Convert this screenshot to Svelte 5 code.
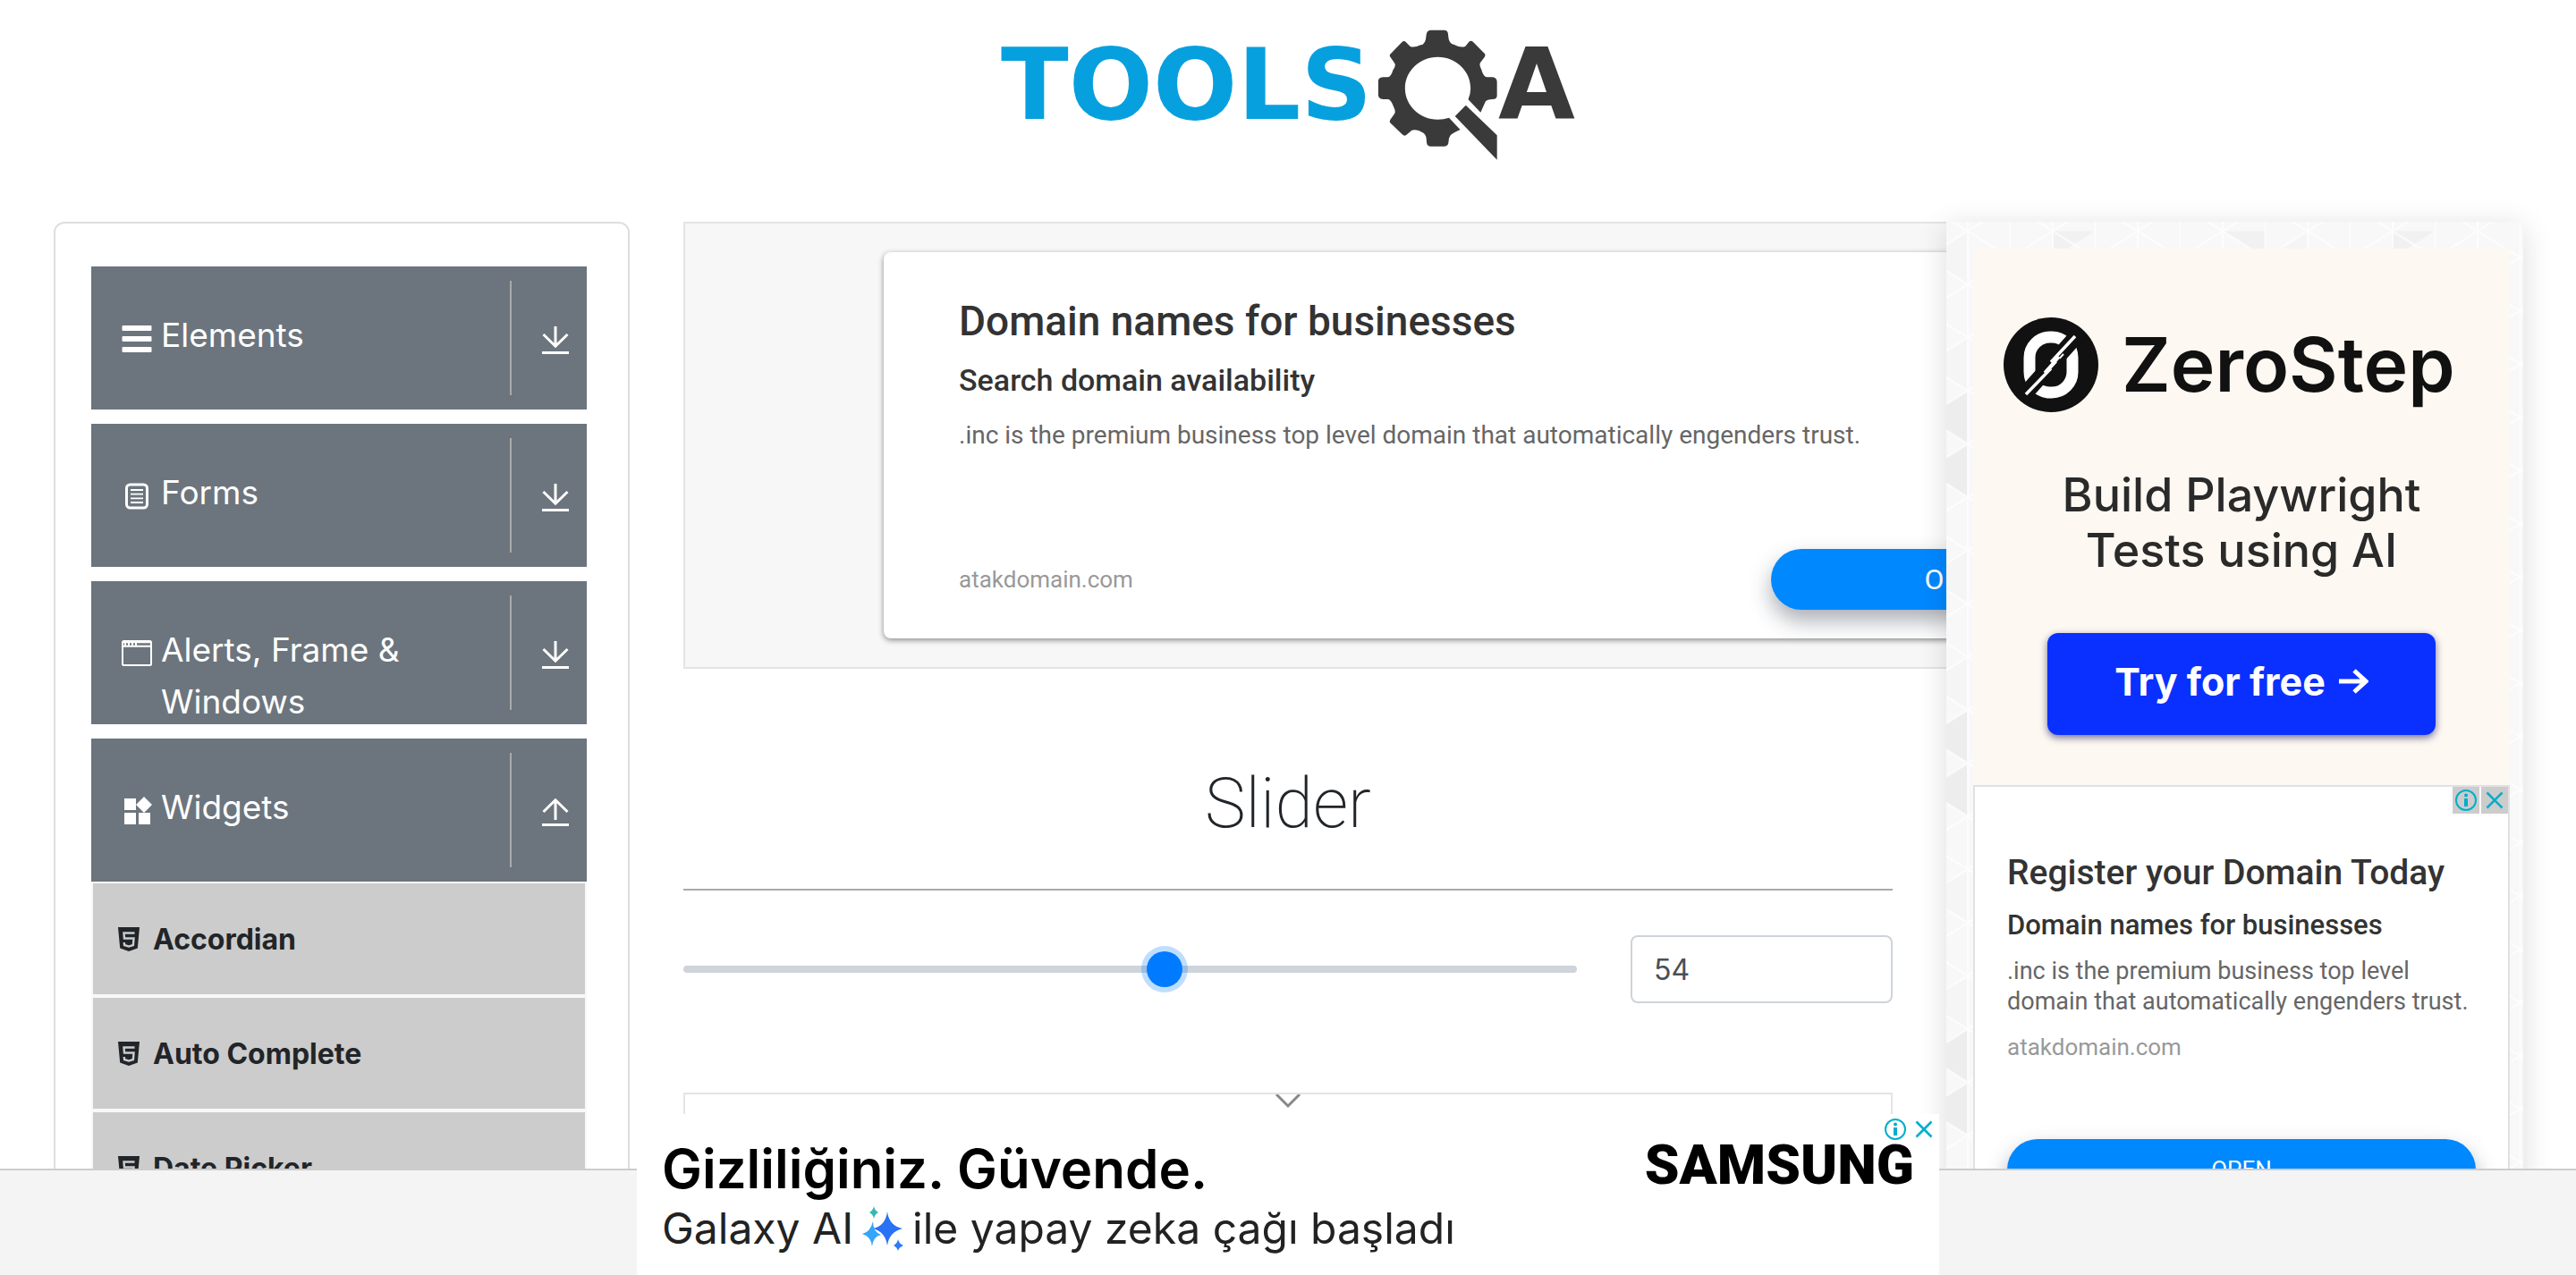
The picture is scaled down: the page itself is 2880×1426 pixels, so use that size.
<script lang="ts">
  let value = $state(54);

  const groups = [
    { title: 'Elements', icon: 'bars', open: false },
    { title: 'Forms', icon: 'form', open: false },
    { title: 'Alerts, Frame & Windows', icon: 'window', open: false },
    { title: 'Widgets', icon: 'widgets', open: true },
  ];
  const widgets = ['Accordian', 'Auto Complete', 'Date Picker'];
</script>

{#snippet infoIcon()}
  <svg class="badge-icon" viewBox="0 0 30 30" aria-hidden="true">
    <circle cx="15" cy="15" r="11" fill="none" stroke="#00aecd" stroke-width="2" />
    <circle cx="15" cy="9.6" r="2" fill="#00aecd" />
    <path d="M13 13h4v9h-4z" fill="#00aecd" />
  </svg>
{/snippet}

{#snippet closeIcon()}
  <svg class="badge-icon" viewBox="0 0 30 30" aria-hidden="true">
    <path d="M6.500 6.500l17 17M23.500 6.500l-17 17" stroke="#00aecd" stroke-width="2.600" />
  </svg>
{/snippet}

<div class="page">
  <header>
    <a class="logo" href="#home" aria-label="ToolsQA">
      <span class="tools">TOOLS</span>
      <svg class="gear" viewBox="980 70 302 438" preserveAspectRatio="none" aria-hidden="true">
        <path
          fill="#3a3a3a"
          fill-rule="evenodd"
          d="M1102 90Q1103 72 1113 72H1148Q1157 72 1157 90Q1158 118 1172 121Q1190 133 1200 126L1210 110Q1215 106 1220 113L1246 148Q1252 154 1248 162L1237 182Q1234 190 1240 204Q1245 229 1254 230H1268Q1279 232 1279 246V291Q1279 304 1268 304Q1254 304 1250 312L1238 348L1207 305Q1213 286 1213 267C1213 209 1176 162 1131 162S1049 209 1049 267S1086 372 1131 372Q1146 372 1159 366L1187 406Q1166 418 1162 426Q1158 434 1158 446Q1157 462 1148 462H1112Q1104 462 1103 448Q1103 424 1095 417Q1078 403 1066 408L1054 422Q1048 430 1042 422L1014 386Q1008 380 1013 371L1023 352Q1026 345 1021 331Q1014 305 1007 304H994Q982 302 982 288V244Q982 231 994 230H1006Q1014 229 1019 206Q1027 190 1023 183L1013 164Q1008 156 1014 150L1041 113Q1046 106 1051 112L1062 127Q1072 132 1088 122Q1101 120 1102 90Z"
        />
        <path fill="#3a3a3a" d="M1201 324L1279 425V507L1174 361Z" />
      </svg>
      <span class="logo-a">A</span>
    </a>
  </header>

  <div class="columns">
    <nav class="sidebar" aria-label="Sections">
      {#each groups as group}
        <button class="group" type="button" aria-expanded={group.open}>
          <span class="group-icon">
            <svg viewBox="0 0 34 34" aria-hidden="true">
              {#if group.icon === 'bars'}
                <path d="M1 2.500h32v5H1zM1 14.500h32v5H1zM1 26.500h32v5H1z" fill="#fff" stroke="#fff" stroke-linejoin="round" />
              {:else if group.icon === 'form'}
                <rect x="5.500" y="4" width="23" height="26" rx="4" fill="none" stroke="#fff" stroke-width="3" />
                <path d="M10 10h14M10 14.700h14M10 19.400h14M10 24h14" stroke="#fff" stroke-width="1.800" />
              {:else if group.icon === 'window'}
                <rect x="1" y="3" width="32" height="27" rx="1.500" fill="none" stroke="#fff" stroke-width="2" />
                <path d="M1 4.300h32M1 8.800h32" stroke="#fff" stroke-width="2" />
                <path d="M4 4v4M8 4v4M12 4v4M16 4v4" stroke="#fff" stroke-width="2" />
              {:else}
                <path d="M3 3h13v13H3zM3 19h13v13H3zM19 19h13v13H19zM25 1l9 9-9 9-9-9z" fill="#fff" />
              {/if}
            </svg>
          </span>
          <span class="group-title">{group.title}</span>
          <span class="group-toggle">
            <svg viewBox="0 0 30 32" aria-hidden="true">
              {#if group.open}
                <path d="M15 24V2M1.500 15L15 1.800L28.500 15" fill="none" stroke="#fff" stroke-width="3" />
              {:else}
                <path d="M15 0v22M1.500 9L15 22.200L28.500 9" fill="none" stroke="#fff" stroke-width="3" />
              {/if}
              <path d="M0 29.500h30" stroke="#fff" stroke-width="3" />
            </svg>
          </span>
        </button>
        {#if group.open}
          <ul>
            {#each widgets as widget}
              <li>
                <a href="#{widget}">
                  <svg viewBox="0 0 24 27" aria-hidden="true">
                    <path d="M0 0h24l-2.200 23.500L12 27l-9.800-3.500z" fill="#212529" />
                    <path d="M18.500 6.500H6.500l.5 6h10.500l-.6 7.500-4.900 1.600-4.900-1.600-.3-3" fill="none" stroke="#ccc" stroke-width="2.400" />
                  </svg>
                  {widget}
                </a>
              </li>
            {/each}
          </ul>
        {/if}
      {/each}
    </nav>

    <main>
      <section class="wide-ad" aria-label="Advertisement">
        <div class="wide-card">
          <h2>Domain names for businesses</h2>
          <h3>Search domain availability</h3>
          <p>.inc is the premium business top level domain that automatically engenders trust.</p>
          <div class="wide-foot">
            <span class="domain">atakdomain.com</span>
            <button class="open" type="button">OPEN</button>
          </div>
        </div>
      </section>

      <h1>Slider</h1>

      <form class="slider-row">
        <input class="range" type="range" min="0" max="100" aria-label="Slider" bind:value />
        <input class="value" type="text" aria-label="Slider value" bind:value />
      </form>

      <section class="lower-ad" aria-label="Advertisement">
        <svg viewBox="0 0 28 16" aria-hidden="true">
          <path d="M1 0l13 13L27 0" fill="none" stroke="#888" stroke-width="3" />
        </svg>
      </section>
    </main>

    <aside>
      <svg class="pattern" aria-hidden="true">
        <defs>
          <pattern id="mesh" x="24" y="10.500" width="95" height="59.500" patternUnits="userSpaceOnUse">
            <path d="M0 0L95 59.500M0 59.500L95 0M0 0V59.500M47.500 0V59.500M95 0V59.500" stroke="#fff" stroke-opacity="0.7" stroke-width="2" />
          </pattern>
          <pattern id="shade" x="24" y="10.500" width="380" height="357" patternUnits="userSpaceOnUse">
            <path d="M380 178.500v59.500l-47.500-29.750zM380 238v59.500l-47.500-29.750z" fill="#ededed" />
            <path d="M380 119v59.500l-47.500-29.750zM380 0v59.500l-47.500-29.750z" fill="#f5f5f5" />
            <path d="M95 0v30L142 0zM285 0l47-30v60z" fill="#f1f1f1" />
          </pattern>
        </defs>
        <rect width="100%" height="100%" fill="#f8f8f8" />
        <rect width="100%" height="100%" fill="url(#shade)" />
        <rect width="100%" height="100%" fill="url(#mesh)" />
      </svg>

      <section class="zero" aria-label="ZeroStep">
        <div class="zero-brand">
          <svg viewBox="0 0 106 106" aria-hidden="true">
            <circle cx="53" cy="53" r="53" fill="#111" />
            <rect x="29" y="22" width="48" height="62" rx="23" fill="none" stroke="#fff" stroke-width="13" />
            <path d="M20 90L86 16" stroke="#111" stroke-width="17" />
            <path d="M25 86L53 57M53 50L80 21M46 62L62 44" stroke="#fff" stroke-width="3.500" />
            <path d="M37 74L67 41" stroke="#fff" stroke-width="2" stroke-dasharray="14 5" />
          </svg>
          <span>ZeroStep</span>
        </div>
        <p>Build Playwright<br />Tests using AI</p>
        <button type="button">
          Try for free
          <svg viewBox="0 0 34 32" aria-hidden="true">
            <path d="M1 16h30M18 4l13 12-13 12" fill="none" stroke="#fff" stroke-width="5" />
          </svg>
        </button>
      </section>

      <section class="side-ad" aria-label="Advertisement">
        <div class="badges">
          <button type="button" aria-label="Ad information">{@render infoIcon()}</button>
          <button type="button" aria-label="Close ad">{@render closeIcon()}</button>
        </div>
        <h2>Register your Domain Today</h2>
        <h3>Domain names for businesses</h3>
        <p>.inc is the premium business top level domain that automatically engenders trust.</p>
        <span class="domain">atakdomain.com</span>
        <button class="open" type="button">OPEN</button>
      </section>
    </aside>
  </div>

  <footer>
    <section class="banner" aria-label="Advertisement">
      <div class="banner-copy">
        <strong>Gizliliğiniz. Güvende.</strong>
        <span class="galaxy">
          Galaxy AI
          <svg viewBox="0 0 46 50" aria-hidden="true">
            <path d="M28 6Q30 22 45 25Q30 29 28 44Q26 29 12 25Q26 22 28 6Z" fill="#2a72f5" />
            <path d="M12 17Q12 29 21 32Q12 34 11 45Q10 34 0 31Q9 29 12 17Z" fill="#35a5fa" />
            <path d="M13 0Q14 5 18 7Q14 9 13 14Q12 9 8 7Q12 5 13 0Z" fill="#35b9b0" />
            <path d="M40 37Q41 42 46 44Q41 46 40 50Q39 46 35 44Q39 42 40 37Z" fill="#2a7cf8" />
          </svg>
          ile yapay zeka çağı başladı
        </span>
      </div>
      <span class="samsung">SAMSUNG</span>
      <div class="banner-badges">
        <button type="button" aria-label="Ad information">{@render infoIcon()}</button>
        <button type="button" aria-label="Close ad">{@render closeIcon()}</button>
      </div>
    </section>
  </footer>
</div>

<style>
  :global(body) {
    margin: 0;
    background: #fff;
  }

  * {
    box-sizing: border-box;
  }

  h1,
  h2,
  h3,
  p,
  ul {
    margin: 0;
    padding: 0;
    font-weight: 400;
  }

  button {
    padding: 0;
    border: 0;
    background: none;
    font: inherit;
    cursor: pointer;
  }

  svg {
    display: block;
    flex: none;
  }

  .page {
    height: 100vh;
    overflow: hidden;
    font-family: Inter, 'Liberation Sans', sans-serif;
    color: #212529;
  }

  header {
    display: flex;
    justify-content: center;
    height: 248px;
    padding-top: 33px;
  }

  .logo {
    display: flex;
    height: 146px;
    font-family: 'DejaVu Sans', sans-serif;
    font-size: 111px;
    font-weight: 700;
    line-height: 124px;
    text-decoration: none;
  }

  .tools {
    color: #07a0df;
  }

  .gear {
    width: 135px;
    height: 146px;
    margin-left: 6px;
  }

  .logo-a {
    color: #3a3a3a;
  }

  .columns {
    display: grid;
    grid-template-columns: minmax(0, 644fr) minmax(0, 1352fr) 645px;
    gap: 60px;
    align-items: start;
    padding: 0 59px 0 60px;
  }

  .sidebar {
    height: 1400px;
    padding: 48px 46px 0 40px;
    border: 2px solid #dedede;
    border-radius: 12px;
  }

  .group {
    display: flex;
    width: 100%;
    height: 160px;
    margin-bottom: 16px;
    padding: 0 20px 0 34px;
    overflow: hidden;
    background: #6c757d;
    color: #fff;
    font-size: 37px;
    line-height: 58px;
    text-align: left;
  }

  .group[aria-expanded='true'] {
    margin-bottom: 0;
  }

  .group-icon {
    padding-top: 64px;
  }

  .group-icon svg {
    width: 34px;
    height: 34px;
  }

  .group-title {
    flex: 1;
    padding: 48px 40px 0 10px;
  }

  .group-toggle {
    display: flex;
    align-items: center;
    height: 128px;
    margin-top: 16px;
    padding: 6px 0 0 34px;
    border-left: 2px solid #aaa;
  }

  .group-toggle svg {
    width: 30px;
    height: 32px;
  }

  .sidebar li {
    list-style: none;
    border: 2px solid #f8f8f8;
    background: #ccc;
  }

  .sidebar li a {
    display: flex;
    align-items: center;
    gap: 15px;
    height: 124px;
    padding-left: 28px;
    color: #212529;
    font-size: 32px;
    font-weight: 700;
    text-decoration: none;
  }

  .sidebar li svg {
    width: 24px;
    height: 27px;
  }

  .wide-ad {
    width: 1940px;
    height: 500px;
    padding: 32px 222px;
    border: 2px solid #e4e4e4;
    background: #f7f7f7;
    font-family: Roboto, sans-serif;
  }

  .wide-card {
    height: 432px;
    padding: 47px 74px 0 84px;
    border-radius: 8px;
    background: #fff;
    box-shadow: 0 2px 6px rgba(0, 0, 0, 0.45);
  }

  h2,
  h3 {
    color: #333;
    font-weight: 500;
  }

  .wide-card h2 {
    font-size: 46px;
    line-height: 60px;
  }

  .wide-card h3 {
    margin-top: 12px;
    font-size: 34px;
    line-height: 48px;
  }

  .wide-card p {
    margin-top: 20px;
    font-size: 28px;
    line-height: 36px;
  }

  .wide-ad p,
  .side-ad p {
    color: #666;
  }

  .domain {
    color: #999;
    font-size: 26px;
    line-height: 34px;
  }

  .wide-foot {
    display: flex;
    align-items: center;
    justify-content: space-between;
    margin-top: 109px;
  }

  .open {
    height: 68px;
    border-radius: 34px;
    background: #08f;
    box-shadow: 0 12px 24px rgba(40, 50, 70, 0.4);
    color: #fff;
    font-size: 26px;
  }

  .wide-foot .open {
    width: 426px;
    font-size: 32px;
  }

  h1 {
    margin-top: 98px;
    padding-bottom: 42px;
    border-bottom: 2px solid #aaa;
    font-family: Roboto, sans-serif;
    font-size: 77px;
    font-weight: 200;
    line-height: 106px;
    text-align: center;
  }

  .slider-row {
    display: grid;
    grid-template-columns: minmax(0, 999fr) minmax(0, 293fr);
    align-items: center;
    gap: 60px;
    height: 176px;
    margin-bottom: 50px;
  }

  .range {
    height: 52px;
    margin: 0;
    appearance: none;
    background: transparent;
    outline: none;
  }

  .range::-webkit-slider-runnable-track {
    height: 8px;
    border-radius: 8px;
    background: #ced4da;
  }

  .range::-webkit-slider-thumb {
    width: 40px;
    height: 40px;
    margin-top: -16px;
    appearance: none;
    border-radius: 50%;
    background: #007bff;
    box-shadow: 0 0 0 6px rgba(0, 123, 255, 0.25);
  }

  .value {
    width: 100%;
    height: 76px;
    padding: 0 24px;
    border: 2px solid #ced4da;
    border-radius: 8px;
    background: #fff;
    color: #495057;
    font-family: inherit;
    font-size: 32px;
  }

  .lower-ad {
    display: flex;
    justify-content: center;
    height: 180px;
    border: 2px solid #e4e4e4;
  }

  .lower-ad svg {
    width: 28px;
    height: 16px;
  }

  aside {
    position: relative;
    padding: 30px 15px 0 30px;
    box-shadow: 0 6px 32px rgba(0, 0, 0, 0.14);
  }

  .pattern {
    position: absolute;
    inset: 0;
    width: 100%;
    height: 100%;
  }

  .zero,
  .side-ad {
    position: relative;
  }

  .zero {
    display: flex;
    flex-direction: column;
    align-items: center;
    height: 600px;
    padding-top: 77px;
    background: #fdf8f1;
    color: #111;
  }

  .zero-brand {
    display: flex;
    align-items: center;
    align-self: flex-start;
    gap: 26px;
    padding-left: 34px;
    font-size: 84px;
    font-weight: 600;
    line-height: 106px;
  }

  .zero-brand svg {
    width: 106px;
    height: 106px;
  }

  .zero p {
    margin-top: 62px;
    color: #2a2a2a;
    font-size: 52px;
    font-weight: 500;
    line-height: 62px;
    text-align: center;
  }

  .zero button {
    display: flex;
    align-items: center;
    justify-content: center;
    gap: 14px;
    width: 434px;
    height: 114px;
    margin-top: 61px;
    padding-bottom: 6px;
    border-radius: 12px;
    background: #0a30ff;
    box-shadow: 0 3px 8px rgba(20, 20, 90, 0.6);
    color: #fff;
    font-size: 43px;
    font-weight: 700;
  }

  .zero button svg {
    width: 34px;
    height: 32px;
  }

  .side-ad {
    display: flex;
    flex-direction: column;
    height: 760px;
    padding: 0 36px;
    border: 2px solid #dfe1e5;
    background: #fff;
    font-family: Roboto, sans-serif;
  }

  .badges {
    display: flex;
    gap: 2px;
    align-self: flex-end;
    height: 30px;
    margin-right: -36px;
  }

  .badges button {
    background: #ccc;
  }

  .badge-icon {
    width: 30px;
    height: 30px;
  }

  .side-ad h2 {
    margin-top: 42px;
    font-size: 39px;
    line-height: 48px;
  }

  .side-ad h3 {
    margin-top: 17px;
    font-size: 31px;
    line-height: 36px;
  }

  .side-ad p {
    margin-top: 16px;
    font-size: 27px;
    line-height: 34px;
  }

  .side-ad .domain {
    margin-top: 17px;
  }

  .side-ad .open {
    margin-top: 86px;
  }

  footer {
    position: fixed;
    right: 0;
    bottom: 0;
    left: 0;
    display: flex;
    align-items: flex-end;
    justify-content: center;
    height: 119px;
    border-top: 2px solid #ccc;
    background: #f4f4f4;
  }

  .banner {
    position: relative;
    display: flex;
    flex: none;
    justify-content: space-between;
    width: 1456px;
    height: 180px;
    padding: 24px 28px 0;
    background: #fff;
    color: #000;
  }

  .banner-copy {
    display: flex;
    flex-direction: column;
  }

  .banner-copy strong {
    font-size: 60px;
    font-weight: 600;
    line-height: 74px;
  }

  .galaxy {
    display: flex;
    gap: 10px;
    align-items: center;
    color: #222;
    font-size: 48px;
    line-height: 60px;
  }

  .galaxy svg {
    width: 46px;
    height: 50px;
  }

  .samsung {
    padding-top: 2px;
    font-family: Roboto, sans-serif;
    font-size: 62px;
    font-weight: 900;
    line-height: 62px;
  }

  .banner-badges {
    position: absolute;
    top: 2px;
    right: 2px;
    display: flex;
    gap: 2px;
  }
</style>
